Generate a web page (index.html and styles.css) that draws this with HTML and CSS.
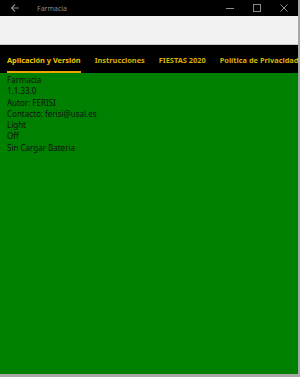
FILE: index.html
```html
<!DOCTYPE html>
<html lang="es">
<head>
  <meta charset="UTF-8">
  <title>Farmacia</title>
  <link rel="stylesheet" href="styles.css">
</head>
<body>
  <div class="window">
    <div class="titlebar">
      <svg class="back" width="10" height="10" viewBox="0 0 10 10">
        <path d="M9 5H1.5M5 1.5L1.5 5L5 8.5" fill="none" stroke="#8c8c8c" stroke-width="1.1"/>
      </svg>
      <span class="title">Farmacia</span>
      <div class="controls">
        <svg width="10" height="10" viewBox="0 0 10 10"><path d="M1 5.5H9" stroke="#8c8c8c" stroke-width="1"/></svg>
        <svg width="10" height="10" viewBox="0 0 10 10"><rect x="1.5" y="1.5" width="7" height="7" fill="none" stroke="#8c8c8c" stroke-width="1"/></svg>
        <svg width="10" height="10" viewBox="0 0 10 10"><path d="M1.5 1.5L8.5 8.5M8.5 1.5L1.5 8.5" stroke="#8c8c8c" stroke-width="1"/></svg>
      </div>
    </div>
    <div class="commandbar"></div>
    <div class="tabs">
      <div class="tab active">Aplicación y Versión</div>
      <div class="tab">Instrucciones</div>
      <div class="tab">FIESTAS 2020</div>
      <div class="tab">Política de Privacidad</div>
    </div>
    <div class="content">
      <div>Farmacia</div>
      <div>1.1.33.0</div>
      <div>Autor: FERISI</div>
      <div>Contacto: ferisi@usal.es</div>
      <div>Light</div>
      <div>Off</div>
      <div>Sin Cargar Bateria</div>
    </div>
  </div>
</body>
</html>
```

FILE: styles.css
```css
html, body {
  margin: 0;
  width: 300px;
  height: 377px;
  overflow: hidden;
  background: #a8a8a8;
  font-family: 'Noto Sans', sans-serif;
}

.window {
  width: 298px;
  height: 374px;
  display: flex;
  flex-direction: column;
  background: #008000;
}

.titlebar {
  height: 16px;
  background: #000;
  display: flex;
  align-items: center;
}

.back {
  margin-left: 10px;
}

.title {
  margin-left: 17px;
  font-size: 7px;
  color: #8a8a8a;
}

.controls {
  margin-left: auto;
  display: flex;
  gap: 17px;
  margin-right: 9px;
}

.commandbar {
  height: 28px;
  background: #f2f2f2;
  border-bottom: 1px solid #c8c8c8;
}

.tabs {
  height: 28px;
  background: #000;
  display: flex;
  gap: 14px;
  padding-left: 7px;
  white-space: nowrap;
  overflow: hidden;
}

.tab {
  height: 100%;
  box-sizing: border-box;
  padding-top: 4px;
  font-size: 7.4px;
  font-weight: bold;
  color: #d6b000;
  line-height: 22px;
  border-bottom: 2px solid transparent;
}

.tab.active {
  color: #f0c400;
  border-bottom-color: #e8a800;
}

.content {
  flex: 1;
  padding: 1px 7px;
  font-size: 8px;
  line-height: 11.3px;
  color: #111;
}
```
